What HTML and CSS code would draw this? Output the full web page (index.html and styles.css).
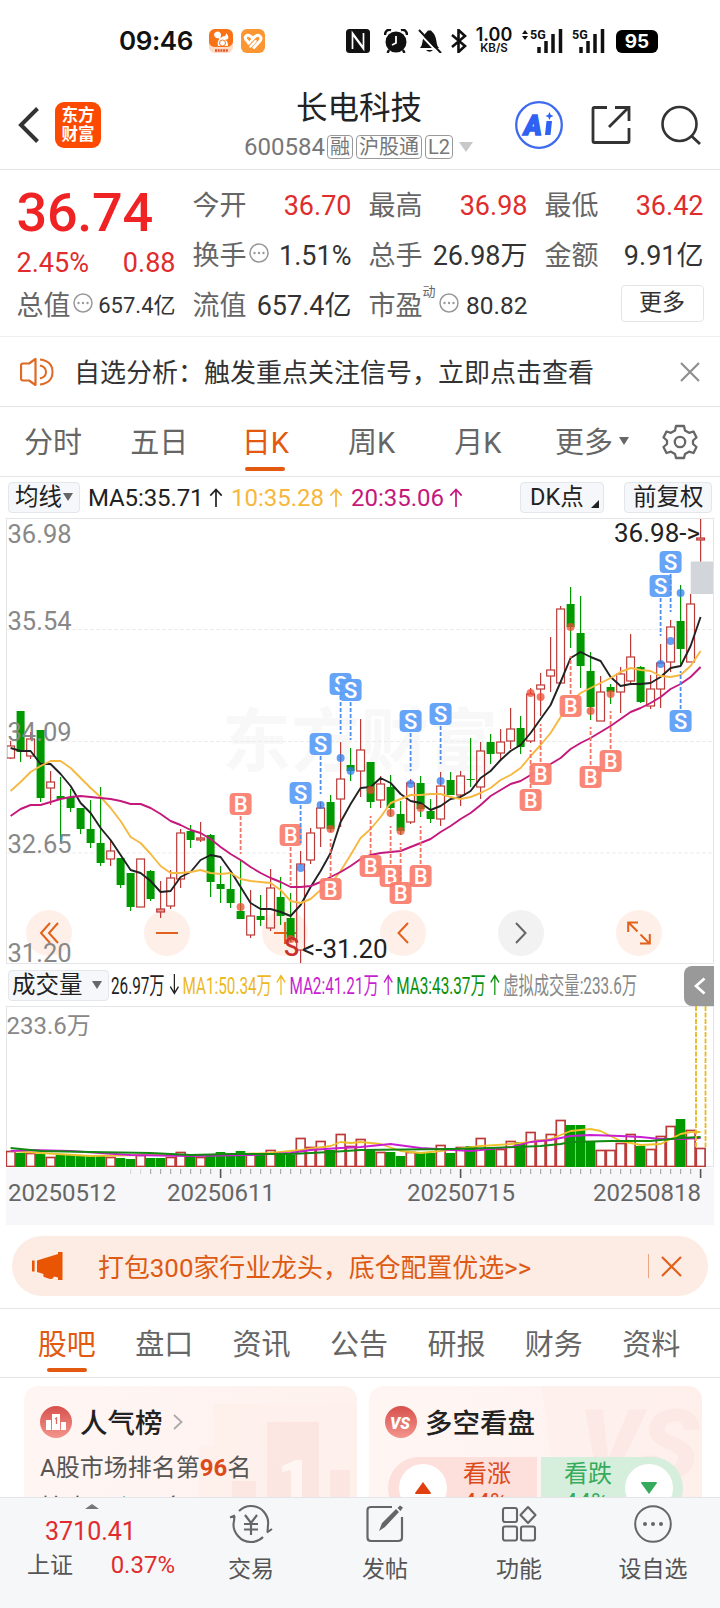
FILE: index.html
```html
<!DOCTYPE html>
<html lang="zh-CN">
<head>
    <meta charset="UTF-8">
    <meta name="viewport" content="width=device-width, initial-scale=1.0">
    <title>长电科技 600584</title>
    <link rel="stylesheet" href="styles.css">
</head>
<body>
    <div class="status-bar">
        <span class="time">09:46</span>
        <svg class="app-icon" width="24" height="24" viewBox="0 0 24 24">
            <rect width="24" height="24" rx="6" fill="#ffd9c2"/>
            <path d="M0 6a6 6 0 0 1 6-6h12a6 6 0 0 1 6 6v7c-1 4-4 5-7 5H7c-4 0-7-2-7-5z" fill="#f97316"/>
            <path d="M5 5c2-4 7-3 7 1 0 2-1 3-2 4 1-1 4-3 6-3 1-1 1-2 1-3 2 2 3 4 2 6l-3 1c3 1 3 4 3 6H9c-1-3 0-6 2-8-4 1-6-1-6-4z" fill="#fff"/>
            <circle cx="13.500" cy="14" r="3" fill="none" stroke="#f97316" stroke-width="1"/>
            <path d="M6 21.500h13" stroke="#e2562a" stroke-width="2.500" stroke-dasharray="2 .7"/>
        </svg>
        <svg class="app-icon second" width="24" height="24" viewBox="0 0 24 24">
            <rect width="24" height="24" rx="6" fill="#fb9633"/>
            <path d="M8 14L4.800 10.500Q3.500 7.500 6 6.500q2.500-1 6 3 3.500-4 6-3 3.500 2 1 5.500L13 18.500" fill="none" stroke="#fff" stroke-width="3" stroke-linejoin="round" stroke-linecap="round"/>
            <path d="M7.500 14.500l4-4M9.500 17.500l5-5.500" stroke="#fff" stroke-width="2.400" stroke-linecap="round"/>
        </svg>
        <svg class="nfc" width="24" height="24" viewBox="0 0 24 24">
            <rect width="24" height="24" rx="3.500" fill="#111"/>
            <path d="M6.500 20V4l10 13.500M17.500 4v16L7.500 6.500" fill="none" stroke="#fff" stroke-width="1.700"/>
        </svg>
        <svg class="alarm" width="24" height="24" viewBox="0 0 24 24">
            <circle cx="12" cy="13" r="10.500" fill="#111"/>
            <path d="M1 6c0-4 3-6 6-5M23 6c0-4-3-6-6-5M5 21l-1.500 3M19 21l1.500 3" stroke="#111" stroke-width="2.400" fill="none"/>
            <path d="M12 7v7l-4 2" stroke="#fff" stroke-width="1.800" fill="none"/>
        </svg>
        <svg class="bell" width="24" height="24" viewBox="0 0 24 24">
            <path d="M2 19c3-3 2-8 4-12 1-3 3-4 4-5.500h3c1 1.500 3 2.500 4 5.500 2 4 1 9 4 12zM8 21h7q-3.500 3.500-7 0z" fill="#111"/>
            <path d="M0 3l21 22" stroke="#fff" stroke-width="2"/>
            <path d="M1 1l22 23" stroke="#111" stroke-width="2"/>
        </svg>
        <svg class="bt" width="16" height="24" viewBox="0 0 16 24">
            <path d="M1 6l13 11-6.500 6V1L14 7 1 18" fill="none" stroke="#111" stroke-width="2.600"/>
        </svg>
        <div class="speed"><b>1.00</b><span>KB/S</span></div>
        <svg class="sig1" width="42" height="26" viewBox="0 0 42 26">
            <path d="M1 6l3-4 3 4zM1 8l3 4 3-4z" fill="#111"/>
            <path d="M18 25v-6M25 25V13M32 25V6M39.500 25V1" stroke="#111" stroke-width="3.500"/>
            <text x="9" y="11" class="g5">5G</text>
        </svg>
        <svg class="sig2" width="33" height="26" viewBox="0 0 33 26">
            <path d="M9 25v-6M16 25V13M23 25V6M30.500 25V1" stroke="#111" stroke-width="3.500"/>
            <text x="0" y="11" class="g5">5G</text>
        </svg>
        <div class="battery">95</div>
    </div>

    <div class="header">
        <svg class="back" width="22" height="38" viewBox="0 0 22 38"><path d="M19.500 2.500L3 19l16.500 16.500" fill="none" stroke="#333" stroke-width="4"/></svg>
        <div class="logo"><span>东方</span><span>财富</span></div>
        <div class="stock">
            <div class="stock-name">长电科技</div>
            <div class="stock-code">
                <span class="code">600584</span>
                <span class="tag">融</span>
                <span class="tag">沪股通</span>
                <span class="tag">L2</span>
                <svg width="14" height="10" viewBox="0 0 14 10"><path d="M0 0h14L7 10z" fill="#c8c8c8"/></svg>
            </div>
        </div>
        <svg class="ai" width="48" height="48" viewBox="0 0 48 48">
            <circle cx="24" cy="24" r="22.800" fill="none" stroke="#3d6af0" stroke-width="2.300"/>
            <text x="9" y="33.500" class="ai-text">A</text>
            <path d="M31.500 20h5.500l-1.500 14h-5.500z" fill="#2f62f2"/>
            <path d="M34.500 11l1.200 2.800 2.800 1.200-2.800 1.200-1.200 2.800-1.200-2.800-2.800-1.200 2.800-1.200z" fill="#2f62f2"/>
        </svg>
        <svg class="share" width="40" height="40" viewBox="0 0 40 40">
            <path d="M16 2.500H3.500q-1.500 0-1.500 1.500v32q0 1.500 1.500 1.500h33q1.500 0 1.500-1.500V23M18 22L37.500 2.500M24 2.500h14V16" fill="none" stroke="#333" stroke-width="2.800"/>
        </svg>
        <svg class="search" width="40" height="40" viewBox="0 0 40 40">
            <circle cx="18.500" cy="19" r="17" fill="none" stroke="#333" stroke-width="2.600"/>
            <path d="M30.500 31l8.500 8" stroke="#333" stroke-width="2.800"/>
        </svg>
    </div>

    <div class="quote">
        <div class="quote-main">
            <div class="price">36.74</div>
            <div class="change"><span>2.45%</span><span>0.88</span></div>
            <div class="cell"><label>总值</label><svg class="dots"><use href="#i-dots"/></svg><span class="val small">657.4亿</span></div>
        </div>
        <div class="quote-col">
            <div class="cell"><label>今开</label><span class="val up">36.70</span></div>
            <div class="cell"><label>换手</label><svg class="dots"><use href="#i-dots"/></svg><span class="val">1.51%</span></div>
            <div class="cell"><label>流值</label><span class="val">657.4亿</span></div>
        </div>
        <div class="quote-col">
            <div class="cell"><label>最高</label><span class="val up">36.98</span></div>
            <div class="cell"><label>总手</label><span class="val">26.98万</span></div>
            <div class="cell"><label>市盈</label><sup>动</sup><svg class="dots"><use href="#i-dots"/></svg><span class="val mid">80.82</span></div>
        </div>
        <div class="quote-col">
            <div class="cell"><label>最低</label><span class="val up">36.42</span></div>
            <div class="cell"><label>金额</label><span class="val">9.91亿</span></div>
            <div class="cell"><span class="more-btn">更多</span></div>
        </div>
    </div>

    <div class="notice">
        <svg width="34" height="30" viewBox="0 0 34 30">
            <path d="M15.500 2v26L9 23.500H3Q1 23.500 1 21.500v-13Q1 6.500 3 6.500h6z" fill="none" stroke="#dd6a26" stroke-width="2.200" stroke-linejoin="round"/>
            <path d="M20 8.500q6 1.500 6 6.500t-6 6.500M20 2.500q12.500 1.500 12.500 12.500T20 27.500" fill="none" stroke="#dd6a26" stroke-width="2"/>
        </svg>
        <span class="notice-text">自选分析：触发重点关注信号，立即点击查看</span>
        <svg width="20" height="20" viewBox="0 0 20 20"><path d="M1 1l18 18M19 1L1 19" stroke="#8f8f8f" stroke-width="2.200"/></svg>
    </div>

    <div class="period-tabs">
        <span>分时</span>
        <span>五日</span>
        <span class="active">日K</span>
        <span>周K</span>
        <span>月K</span>
        <span class="more">更多<i class="caret"></i></span>
        <svg width="36" height="36" viewBox="0 0 36 36">
            <path d="M14 2h8l1 4.500 4 2.300 4.500-1.300 3 6-3.500 3v3.500l3.500 3-3 6-4.500-1.300-4 2.300-1 4h-8l-1-4-4-2.300L4.500 29l-3-6L5 20v-3.500l-3.500-3 3-6L9 8.800l4-2.300z" fill="none" stroke="#666" stroke-width="2.300" stroke-linejoin="round"/>
            <circle cx="18" cy="18" r="5.200" fill="none" stroke="#666" stroke-width="2.300"/>
        </svg>
    </div>

    <div class="ma-row">
        <span class="chip">均线<i class="caret"></i></span>
        <span class="ma5">MA5:35.71<svg class="arrow"><use href="#i-up"/></svg></span>
        <span class="ma10">10:35.28<svg class="arrow"><use href="#i-up"/></svg></span>
        <span class="ma20">20:35.06<svg class="arrow"><use href="#i-up"/></svg></span>
        <span class="chip dk">DK点<i class="corner"></i></span>
        <span class="chip fq">前复权</span>
    </div>

    <div class="k-chart">
        <svg id="k-svg" width="708" height="446" viewBox="6 518 708 446"></svg>
        <div class="tools">
            <span class="tool"><svg width="20" height="22" viewBox="0 0 20 22"><path d="M11 1L2 11l9 10M19 1l-9 10 9 10"/></svg></span>
            <span class="tool"><svg width="24" height="22" viewBox="0 0 24 22"><path d="M1 11h22"/></svg></span>
            <span class="tool"><svg width="24" height="22" viewBox="0 0 24 22"><path d="M1 11h22M12 0v22"/></svg></span>
            <span class="tool"><svg width="12" height="22" viewBox="0 0 12 22"><path d="M11 1L1.500 11l9.500 10"/></svg></span>
            <span class="tool gray"><svg width="12" height="22" viewBox="0 0 12 22"><path d="M1 1l9.500 10L1 21"/></svg></span>
            <span class="tool"><svg width="24" height="24" viewBox="0 0 24 24"><path d="M1.200 11V1.500H11M1.500 1.500l9 9M22.800 13v9.500H13M22.500 22.500l-9-9"/></svg></span>
        </div>
    </div>

    <div class="vol-row">
        <span class="chip">成交量<i class="caret"></i></span>
        <div class="vol-text">
            <span class="now">26.97万<svg class="arrow"><use href="#i-down"/></svg></span>
            <span class="v1">MA1:50.34万<svg class="arrow"><use href="#i-up"/></svg></span>
            <span class="v2">MA2:41.21万<svg class="arrow"><use href="#i-up"/></svg></span>
            <span class="v3">MA3:43.37万<svg class="arrow"><use href="#i-up"/></svg></span>
            <span class="v4">虚拟成交量:233.6万</span>
        </div>
        <span class="fold"><svg width="12" height="18" viewBox="0 0 12 18"><path d="M10.500 1.500L2 9l8.500 7.500" fill="none" stroke="#fff" stroke-width="2.800"/></svg></span>
    </div>
    <div class="vol-chart">
        <svg id="v-svg" width="708" height="161" viewBox="6 1007 708 161"></svg>
    </div>
    <div class="axis">
        <svg id="axis-svg" width="708" height="12" viewBox="6 1168 708 12"></svg>
        <div class="dates">
            <span>20250512</span>
            <span>20250611</span>
            <span>20250715</span>
            <span>20250818</span>
        </div>
    </div>

    <div class="banner">
        <svg width="31" height="28" viewBox="0 0 31 28">
            <path d="M0 8.500h2.600v11H0zM5 8.500L26 2V0h4.500v28H26v-2.500l-4-1q-1 3-4 2.500l-6-2q-1-.500-.5-3L5 20z" fill="#ea5504"/>
        </svg>
        <span class="banner-text">打包300家行业龙头，底仓配置优选&gt;&gt;</span>
        <i class="divider"></i>
        <svg width="21" height="21" viewBox="0 0 21 21"><path d="M1 1l19 19M20 1L1 20" stroke="#e2611c" stroke-width="2.200"/></svg>
    </div>

    <div class="section-tabs">
        <span class="active">股吧</span>
        <span>盘口</span>
        <span>资讯</span>
        <span>公告</span>
        <span>研报</span>
        <span>财务</span>
        <span>资料</span>
    </div>

    <div class="cards">
        <div class="card">
            <svg class="card-bg" width="333" height="120" viewBox="0 0 333 120">
                <path d="M190 18h143v102H175V60h15z" fill="#fdeeea" opacity=".55"/>
                <path d="M243 36h52v84h-52zM208 95h24v25h-24zM306 84h20v36h-20z" fill="#fbe3df" opacity=".75"/>
                <path d="M258 80l14-6h6v46h-11V84l-9 2z" fill="#fff5f2"/>
            </svg>
            <div class="card-title">
                <svg width="32" height="32" viewBox="0 0 32 32">
                    <circle cx="16" cy="16" r="16" fill="url(#badge)"/>
                    <path d="M6 14h5v10H6zM12 8h8v16h-8zM21 16h5v8h-5z" fill="#fff"/>
                    <path d="M15 13l1.500-1v6" stroke="#dd6660" stroke-width="1.300" fill="none"/>
                </svg>
                <span>人气榜</span>
                <svg class="chev" width="10" height="16" viewBox="0 0 10 16"><path d="M1 1l7.500 7L1 15" fill="none" stroke="#aaa" stroke-width="1.800"/></svg>
            </div>
            <p>A股市场排名第<b>96</b>名</p>
            <p class="second">较昨日<em>↑10</em>名</p>
        </div>
        <div class="card">
            <svg class="card-bg" width="333" height="120" viewBox="0 0 333 120">
                <path d="M172 0h161v120H190z" fill="#fdeeea" opacity=".6"/>
                <text x="210" y="92" class="vs-bg">VS</text>
            </svg>
            <div class="card-title">
                <svg width="32" height="32" viewBox="0 0 32 32">
                    <circle cx="16" cy="16" r="16" fill="url(#badge)"/>
                    <text x="5" y="22.500" class="vs">VS</text>
                </svg>
                <span>多空看盘</span>
            </div>
            <div class="vote">
                <div class="bull"><i><svg width="16" height="12" viewBox="0 0 16 12"><path d="M8 0l8 11q0 1-1 1H1q-1 0-1-1z" fill="#e0400f"/></svg></i><span>看涨<br>44%</span></div>
                <div class="bear"><span>看跌<br>44%</span><i><svg width="16" height="12" viewBox="0 0 16 12"><path d="M8 12l8-11q0-1-1-1H1Q0 0 0 1z" fill="#36ab5c"/></svg></i></div>
            </div>
        </div>
    </div>

    <div class="bottom-bar">
        <div class="index">
            <i class="tri-up"></i>
            <div class="point">3710.41</div>
            <div class="index-row"><label>上证</label><span>0.37%</span></div>
        </div>
        <div class="nav">
            <svg width="44" height="40" viewBox="0 0 44 40">
                <path d="M10 7q5-5 12-5 8 0 13 6 5 6 4 13l-.500 7.500M34 33q-5 5-12 5-8 0-13-6-6-7-4-15l.500-5M1 13.500l5-2M43 25l-5 3.500" fill="none" stroke="#666" stroke-width="2.100"/>
                <path d="M16 11l6 8 6-8M15 20h14M15 25.500h14M22 19v12" fill="none" stroke="#666" stroke-width="2.200"/>
            </svg>
            <span>交易</span>
        </div>
        <div class="nav">
            <svg width="38" height="40" viewBox="0 0 38 40">
                <path d="M26 3H5Q1.500 3 1.500 6v27.500q0 3.500 3.500 3.500h27q4 0 4-3.500V13" fill="none" stroke="#666" stroke-width="2.200"/>
                <path d="M13 27l3-8L30 5l3 3-14 15zM31.500 4l2.500-2.500 3 2L34.500 7z" fill="#666"/>
            </svg>
            <span>发帖</span>
        </div>
        <div class="nav">
            <svg width="36" height="40" viewBox="0 0 36 40">
                <g fill="none" stroke="#666" stroke-width="2.100"><rect x="2" y="4" width="14" height="14" rx="2"/><rect x="2" y="22.500" width="14" height="14" rx="2"/><rect x="20" y="22.500" width="14" height="14" rx="2"/><path d="M27 3l7.500 8-7.500 8-7.500-8z" stroke-linejoin="round"/></g>
            </svg>
            <span>功能</span>
        </div>
        <div class="nav">
            <svg width="40" height="40" viewBox="0 0 40 40">
                <circle cx="20" cy="20" r="17.800" fill="none" stroke="#666" stroke-width="2"/>
                <g fill="#666"><circle cx="12" cy="20" r="2"/><circle cx="20" cy="20" r="2"/><circle cx="28" cy="20" r="2"/></g>
            </svg>
            <span>设自选</span>
        </div>
    </div>

    <svg class="defs" width="0" height="0">
        <defs>
            <linearGradient id="badge" x1="0" y1="0" x2="0" y2="1"><stop offset="0" stop-color="#d8504c"/><stop offset="1" stop-color="#f2958c"/></linearGradient>
        </defs>
        <symbol id="i-dots" viewBox="0 0 20 20">
            <circle cx="10" cy="10" r="9" fill="none" stroke="#999" stroke-width="1.500"/>
            <circle cx="5.500" cy="10" r="1.200" fill="#999"/><circle cx="10" cy="10" r="1.200" fill="#999"/><circle cx="14.500" cy="10" r="1.200" fill="#999"/>
        </symbol>
        <symbol id="i-up" viewBox="0 0 14 20"><path d="M7 20V2M1 8l6-6.500L13 8" fill="none" stroke="currentColor" stroke-width="1.800"/></symbol>
        <symbol id="i-down" viewBox="0 0 14 20"><path d="M7 0v18M1 12l6 6.500 6-6.500" fill="none" stroke="currentColor" stroke-width="1.800"/></symbol>
    </svg>
    <script src="chart.js"></script>
</body>
</html>
```
FILE: styles.css
```css
* {
    box-sizing: border-box;
}
body {
    margin: 0;
    width: 720px;
    height: 1608px;
    overflow: hidden;
    background: #fff;
    color: #333;
    font-family: Roboto, "Noto Sans CJK SC", sans-serif;
    font-weight: 400;
    display: flex;
    flex-direction: column;
}
svg {
    flex: none;
    display: block;
}
i, em {
    font-style: normal;
}
.up {
    color: #e02c2c;
}
.defs {
    position: absolute;
}

/* Status bar */
.status-bar {
    height: 80px;
    flex: none;
    display: flex;
    align-items: center;
    padding: 2px 0 0 119px;
}
.time {
    width: 90px;
    font: 600 26px/30px Inter, sans-serif;
    letter-spacing: -0.4px;
    color: #111;
}
.second {
    margin-left: 8px;
}
.nfc {
    margin-left: 81px;
}
.alarm {
    margin-left: 14px;
}
.bell {
    margin-left: 10px;
}
.bt {
    margin-left: 9px;
}
.speed {
    width: 38px;
    margin-left: 8px;
    color: #111;
    text-align: center;
    font-family: Inter, sans-serif;
    font-weight: 600;
}
.speed b {
    display: block;
    font-size: 18px;
    line-height: 14px;
    font-weight: 600;
}
.speed span {
    display: block;
    font-size: 11.500px;
    line-height: 12px;
}
.g5 {
    font: 700 12.500px Roboto, sans-serif;
    fill: #111;
}
.sig1 {
    margin-left: 8px;
}
.sig2 {
    margin-left: 9px;
}
.battery {
    width: 42px;
    height: 23px;
    margin-left: 11px;
    border-radius: 6px;
    background: #000;
    color: #fff;
    text-align: center;
    font: 700 19px/23px Inter, sans-serif;
}

/* Header */
.header {
    height: 90px;
    flex: none;
    display: flex;
    align-items: center;
    padding-left: 18px;
    border-bottom: 1px solid #e5e5e5;
}
.logo {
    width: 46px;
    height: 46px;
    margin-left: 15px;
    border-radius: 9px;
    background: #fd4a03;
    color: #fff;
    font-size: 16.500px;
    font-weight: 700;
    line-height: 19px;
    text-align: center;
    padding-top: 4px;
}
.logo span {
    display: block;
}
.stock {
    width: 230px;
    margin-left: 143px;
}
.stock-name {
    margin-top: 5px;
    font-size: 31.500px;
    line-height: 40px;
    text-align: center;
    color: #222;
}
.stock-code {
    display: flex;
    align-items: center;
    height: 26px;
    margin: 5px 0 5px;
    color: #777;
}
.code {
    width: 83px;
    flex: none;
    font-size: 24px;
    line-height: 26px;
}
.tag {
    height: 24px;
    flex: none;
    padding: 0 2px;
    margin-right: 3px;
    border: 1px solid #999;
    border-radius: 4px;
    font-size: 20px;
    line-height: 22px;
    white-space: nowrap;
}
.stock-code svg {
    margin-left: 3px;
}
.ai {
    margin-left: 41px;
}
.ai-text {
    font: italic 900 27px Roboto, sans-serif;
    fill: #2f62f2;
    stroke: #2f62f2;
    stroke-width: 1.500px;
}
.share {
    margin-left: 28px;
}
.search {
    margin-left: 30px;
}

/* Quote */
.quote {
    height: 167px;
    flex: none;
    display: grid;
    grid-template-columns: repeat(4, 159px);
    column-gap: 17px;
    padding: 10px 0 0 16.500px;
    border-bottom: 1px solid #eee;
}
.price {
    height: 64px;
    font-size: 54px;
    font-weight: 500;
    line-height: 65px;
    letter-spacing: -0.3px;
    color: #ef2323;
}
.change {
    height: 36px;
    display: flex;
    justify-content: space-between;
    font-size: 27px;
    line-height: 39px;
    color: #e02c2c;
}
.cell {
    height: 50px;
    display: flex;
    align-items: center;
    font-size: 27px;
    line-height: 50px;
    white-space: nowrap;
}
.cell label {
    color: #666;
    padding-top: 2px;
}
.val {
    margin-left: auto;
    padding-top: 1px;
}
.val.small {
    font-size: 22px;
}
.val.mid {
    font-size: 24.500px;
}
.dots {
    width: 20px;
    height: 20px;
    margin-left: 2px;
    margin-bottom: 4px;
}
.cell sup {
    font-size: 13px;
    line-height: 14px;
    align-self: flex-start;
    color: #666;
    margin-top: 5px;
    width: 14px;
}
.more-btn {
    width: 83px;
    height: 37px;
    margin-left: auto;
    margin-bottom: 3px;
    border: 1px solid #e4e4e4;
    border-radius: 4px;
    text-align: center;
    font-size: 23px;
    line-height: 34px;
}

/* Notice */
.notice {
    height: 70px;
    flex: none;
    display: flex;
    align-items: center;
    padding: 0 20px 0 20px;
    border-bottom: 1px solid #e5e5e5;
}
.notice-text {
    flex: 1;
    margin-left: 20px;
    margin-bottom: 3px;
    font-size: 26px;
    white-space: nowrap;
}

/* K line tabs */
.period-tabs {
    height: 70px;
    flex: none;
    display: flex;
    align-items: center;
    border-bottom: 1px solid #e5e5e5;
    font-size: 29px;
    color: #666;
}
.period-tabs span {
    width: 106.200px;
    height: 69px;
    line-height: 73px;
    text-align: center;
    position: relative;
}
.period-tabs .more {
    width: 131px;
    padding-right: 9px;
}
.period-tabs .active, .section-tabs .active {
    color: #e2590f;
}
.period-tabs .active::after, .section-tabs .active::after {
    content: "";
    position: absolute;
    left: 50%;
    bottom: 5px;
    width: 40px;
    height: 4px;
    margin-left: -20px;
    border-radius: 2px;
    background: #e2590f;
}
.caret {
    display: inline-block;
    border: 5px solid transparent;
    border-top: 8px solid #666;
    border-bottom: 0;
    margin-left: 6px;
    vertical-align: 8px;
}

/* MA row */
.ma-row {
    height: 41px;
    flex: none;
    display: flex;
    align-items: center;
    padding-left: 8px;
    font-size: 24px;
    line-height: 30px;
    white-space: nowrap;
}
.chip {
    height: 31px;
    border: 1px solid #e3e6ea;
    border-radius: 4px;
    background: #f6f7fa;
    font-size: 23.500px;
    line-height: 29px;
    color: #222;
    padding-left: 6px;
    white-space: nowrap;
}
.ma-row .chip:first-child {
    width: 72px;
}
.ma-row .caret {
    margin-left: 1px;
    vertical-align: 4px;
}
.arrow {
    display: inline-block;
    width: 14px;
    height: 19px;
    margin-left: 5px;
    vertical-align: -1px;
}
.ma5 {
    width: 143px;
    margin-left: 8px;
    color: #222;
    letter-spacing: -0.1px;
}
.ma10 {
    width: 120px;
    color: #f6b73c;
}
.ma20 {
    width: 169px;
    color: #c4187c;
}
.chip.dk {
    width: 84px;
    padding-left: 9px;
}
.corner {
    display: inline-block;
    border-left: 8px solid transparent;
    border-bottom: 8px solid #222;
    margin-left: 7px;
    vertical-align: -3px;
}
.chip.fq {
    width: 88px;
    margin-left: 20px;
    padding-left: 8px;
}

/* Charts */
.k-chart {
    position: relative;
    height: 447px;
    flex: none;
    padding: 0 6px;
}
#k-svg {
    position: relative;
    z-index: 1;
}
.axis-label {
    font-size: 25.500px;
    fill: #888;
}
.price-tip {
    font-size: 26px;
    fill: #222;
}
.mark {
    font-size: 22px;
    font-weight: 500;
    fill: #fff;
    text-anchor: middle;
}
.low-mark {
    font-size: 25px;
    font-weight: 500;
    fill: #c9302c;
    text-anchor: middle;
}
.watermark {
    font-size: 69px;
    font-weight: 700;
    fill: #f8f8f9;
}
.tools {
    position: absolute;
    left: 26px;
    bottom: 9px;
    display: flex;
    gap: 72px;
}
.tool {
    width: 46px;
    height: 46px;
    border-radius: 50%;
    background: #fef0e8;
    display: flex;
    align-items: center;
    justify-content: center;
}
.tool path {
    fill: none;
    stroke: #e2611c;
    stroke-width: 2px;
}
.tool.gray {
    background: #f2f2f2;
}
.tool.gray path {
    stroke: #666;
}
.vol-row {
    height: 41px;
    flex: none;
    display: flex;
    align-items: center;
    padding: 0 6px 0 8px;
}
.vol-row .chip {
    width: 101px;
    padding-left: 3px;
    flex: none;
}
.vol-row .caret {
    margin-left: 9px;
    vertical-align: 4px;
}
.vol-text {
    display: flex;
    flex: none;
    width: 560px;
    margin-left: 2px;
    font-size: 23.500px;
    line-height: 30px;
    white-space: nowrap;
    transform: scaleX(0.65);
    transform-origin: left;
}
.vol-text span {
    width: 164.500px;
    flex: none;
}
.vol-text .arrow {
    width: 19px;
    height: 21px;
}
.vol-text .now {
    width: 110px;
    color: #222;
}
.vol-text .v1 {
    color: #edb91f;
}
.vol-text .v2 {
    color: #c71fd1;
}
.vol-text .v3 {
    color: #0a910a;
}
.vol-text .v4 {
    color: #888;
}
.fold {
    width: 30px;
    height: 40px;
    margin-left: auto;
    border-radius: 8px 0 0 8px;
    background: #999;
    display: flex;
    align-items: center;
    padding-left: 10px;
}
.vol-chart {
    height: 162px;
    flex: none;
    padding: 0 6px;
}
.axis {
    height: 57px;
    flex: none;
    margin: 0 6px;
    background: #f7f7fa;
}
.dates {
    display: flex;
    padding-left: 2px;
    font-size: 24px;
    line-height: 26px;
    color: #666;
}
.dates span:nth-child(1) {
    width: 159px;
}
.dates span:nth-child(2) {
    width: 240px;
}
.dates span:nth-child(3) {
    width: 186px;
}

/* Banner */
.banner {
    height: 60px;
    flex: none;
    margin: 11px 12px 12px;
    padding: 0 26px 0 20px;
    border-radius: 30px;
    background: #fdece3;
    color: #dd5a14;
    display: flex;
    align-items: center;
}
.banner-text {
    flex: 1;
    margin-left: 35px;
    margin-bottom: 2px;
    font-size: 25.900px;
    white-space: nowrap;
}
.divider {
    width: 1px;
    height: 24px;
    margin-right: 12px;
    background: #eaa583;
}

/* Section tabs */
.section-tabs {
    height: 70px;
    flex: none;
    display: flex;
    padding: 0 20px 0 18px;
    border-top: 1px solid #e5e5e5;
    border-bottom: 1px solid #e5e5e5;
    font-size: 29px;
    line-height: 73px;
    color: #666;
}
.section-tabs span {
    flex: 1;
    height: 68px;
    text-align: center;
    position: relative;
}

/* Cards */
.cards {
    height: 119px;
    flex: none;
    padding: 8px 18px 0 24px;
    display: flex;
    gap: 12px;
    overflow: hidden;
}
.card {
    position: relative;
    width: 333px;
    height: 150px;
    flex: none;
    padding: 18px 16px 0;
    border-radius: 14px;
    background: linear-gradient(100deg, #fff6f3, #fef1ee);
    overflow: hidden;
}
.card-bg {
    position: absolute;
    left: 0;
    top: 0;
}
.card-title {
    position: relative;
    display: flex;
    align-items: center;
    height: 36px;
    font-size: 27.500px;
    font-weight: 500;
    color: #222;
}
.card-title span {
    margin-left: 8px;
    margin-bottom: 2px;
}
.chev {
    margin-left: 10px;
}
.card p {
    position: relative;
    margin: 10px 0 0;
    font-size: 24px;
    line-height: 36px;
    color: #555;
}
.card p.second {
    margin: 4px 0 0;
}
.card b {
    color: #dc4a1a;
}
.card em {
    color: #36ab5c;
}
.vs {
    font: italic 900 16px Roboto, sans-serif;
    fill: #fff;
}
.vs-bg {
    font: italic 900 96px Roboto, sans-serif;
    fill: #fce8e4;
}
.vote {
    position: relative;
    display: flex;
    gap: 4px;
    width: 295px;
    height: 62px;
    margin: 17px 0 0 3px;
    font-size: 24px;
    line-height: 28px;
}
.vote > div {
    display: flex;
    align-items: center;
}
.vote i {
    width: 48px;
    height: 48px;
    flex: none;
    border-radius: 50%;
    background: #fff;
    display: flex;
    align-items: center;
    justify-content: center;
}
.vote span {
    height: 58px;
    margin-top: 2px;
}
.bull {
    width: 149px;
    padding-left: 11px;
    border-radius: 31px 0 0 31px;
    background: #fddfdb;
    color: #dc4a1a;
}
.bull span {
    margin-left: 16px;
}
.bear {
    width: 142px;
    padding: 0 10px 0 23px;
    justify-content: space-between;
    border-radius: 0 31px 31px 0;
    background: #d6efdd;
    color: #36ab5c;
}

/* Bottom bar */
.bottom-bar {
    height: 111px;
    flex: none;
    display: flex;
    border-top: 1px solid #e3e5e8;
    background: #f6f7f9;
    color: #555;
    font-size: 22.500px;
}
.index {
    width: 184px;
    color: #e02c2c;
}
.tri-up {
    display: block;
    width: 14px;
    margin: 6px 0 0 85px;
    border: 7px solid transparent;
    border-top: 0;
    border-bottom: 5px solid #777;
}
.point {
    margin: 8px 0 0 45px;
    font-size: 25px;
    line-height: 30px;
}
.index-row {
    display: flex;
    justify-content: space-between;
    padding: 3px 9px 0 27px;
    line-height: 30px;
    font-size: 24px;
}
.index-row label {
    padding-top: 1px;
    font-size: 23px;
    color: #555;
}
.nav {
    width: 134px;
    display: flex;
    flex-direction: column;
    align-items: center;
    padding-top: 6px;
}
.nav span {
    line-height: 30px;
    margin-top: 11px;
    font-size: 23px;
}
```
FILE: chart.js
```js
const GREEN = '#009a00';
const RED = '#bb3a38';
const xOf = i => 10.6 + i * 10;

// high, body top, body bottom, low, direction (1 = up, 0 = down)
const candles = [
    [741,746,758,759,1],[711,711,752,762,0],[732,739,756,759,1],[730,730,798,802,0],[771,782,788,805,1],
    [777,796,799,842,0],[789,797,808,812,0],[808,808,829,834,0],[800,829,843,848,0],[787,843,863,866,0],
    [840,851,859,866,1],[858,858,885,888,0],[873,873,907,911,0],[859,859,907,907,1],[870,871,899,901,0],
    [881,909,912,918,1],[870,878,906,909,1],[829,833,879,888,1],[825,831,840,848,0],[822,838,840,842,1],
    [834,835,882,897,0],[866,884,889,903,0],[873,889,903,908,0],[861,911,919,919,0],[890,916,935,938,1],
    [895,916,920,926,0],[869,888,928,931,1],[877,897,916,925,0],[893,918,938,942,0],[851,864,950,964,1],
    [828,833,860,864,1],[802,808,828,847,1],[795,802,829,832,0],[742,779,799,827,1],[748,765,771,781,0],
    [719,750,771,797,1],[762,762,802,808,0],[776,784,800,808,1],[775,787,808,817,0],[801,814,831,835,0],
    [779,783,822,824,1],[776,783,809,817,0],[799,811,819,823,0],[772,786,819,826,1],[772,780,795,795,0],
    [771,776,795,806,1],[738,779,780,787,0],[742,751,787,799,1],[734,742,754,764,0],[729,742,753,761,1],
    [708,729,741,749,1],[716,728,747,754,0],[688,694,741,743,1],[673,685,689,716,1],[637,670,676,692,1],
    [606,609,683,683,1],[587,604,627,648,0],[596,633,666,688,0],[652,671,707,720,0],[676,692,721,721,1],
    [684,687,692,704,0],[667,674,692,713,1],[634,657,681,685,1],[666,667,702,703,0],[675,689,706,709,1],
    [644,663,689,708,1],[620,627,662,672,1],[585,621,649,665,0],[594,604,662,662,1],[518,538,540,562,1]
];
const ma5 = [748,751,751,764,764,774,786,803,813,828,840,855,870,873,881,892,891,877,872,860,855,857,871,887,903,909,909,912,916,905,887,871,853,822,804,788,787,778,783,794,801,803,810,806,799,797,791,778,771,760,751,745,733,719,705,682,658,652,657,661,677,686,684,684,683,677,668,666,646,617];
const ma10 = [791,782,772,766,761,761,768,778,788,797,808,821,837,843,854,866,873,873,872,870,873,874,873,879,881,882,883,890,901,903,899,890,884,871,855,838,829,817,803,799,795,795,794,794,797,799,797,793,788,780,775,768,756,745,733,717,702,693,688,683,678,672,668,670,671,676,677,675,666,651];
const ma20 = [816,809,805,805,802,799,797,796,797,798,799,801,804,804,808,814,821,825,830,833,839,847,854,860,867,873,878,882,887,887,886,882,877,872,866,859,855,853,852,851,847,843,839,832,826,819,813,805,796,790,784,781,775,770,764,758,749,743,738,732,726,719,712,708,703,697,689,684,677,667];

// type, candle index, badge centre, dot
const marks = [
    ['B',23,804,907],['B',28,835,939],['S',29,793,868],['S',31,744,805],['S',33,684,758],['S',34,690,771],
    ['B',32,889,829],['B',36,866,790],['B',38,876,813],['B',39,893,831],['B',41,876,808],['S',40,721,784],
    ['S',43,714,781],['B',52,800,693],['B',53,774,697],['B',56,706,627],['B',58,777,711],['B',60,761,694],
    ['S',65,586,664],['S',66,562,641],['S',67,721,593]
];

const volTop = [1152,1154,1154,1155,1158,1156,1156,1157,1157,1157,1158,1159,1160,1156,1159,1159,1158,1153,1157,1158,1156,1153,1155,1152,1155,1156,1151,1156,1156,1139,1148,1142,1151,1135,1147,1140,1151,1153,1153,1157,1153,1154,1154,1146,1154,1148,1147,1139,1149,1150,1142,1143,1133,1141,1135,1121,1126,1126,1142,1151,1151,1144,1135,1147,1150,1137,1127,1120,1131,1149];
const volUp = [0,2,4,10,13,16,17,19,24,26,29,30,31,33,34,35,37,40,43,45,47,49,50,52,53,54,55,59,60,61,62,64,65,66,68,69];

const volLines = [
    ['#edc12c', [[0,1152],[3,1154],[8,1157],[13,1156],[20,1156],[26,1154],[29,1151],[32,1147],[33,1143],[34,1144],[35,1143],[37,1145],[39,1152],[41,1154],[43,1152],[47,1147],[50,1145],[52,1143],[54,1140],[56,1132],[58,1130],[59,1132],[61,1142],[63,1146],[65,1145],[67,1135],[68,1133],[69,1133]]],
    ['#c71fd1', [[0,1152],[2,1151],[6,1152],[12,1156],[18,1157],[24,1156],[28,1154],[30,1151],[33,1149],[35,1148],[38,1145],[41,1149],[46,1152],[50,1148],[52,1143],[54,1141],[56,1137],[58,1136],[61,1137],[63,1138],[65,1140],[67,1140],[69,1139]]],
    ['#108a10', [[0,1149],[3,1152],[8,1153],[14,1154],[18,1156],[22,1155],[28,1155],[32,1153],[35,1151],[44,1150],[48,1149],[53,1147],[55,1145],[56,1143],[60,1142],[64,1142],[67,1139],[69,1138]]]
];

function line(x1, y1, x2, y2, color, width, extra) {
    return `<line x1="${x1}" y1="${y1}" x2="${x2}" y2="${y2}" stroke="${color}" stroke-width="${width}" ${extra || ''}/>`;
}
function polyline(points, color, width) {
    return `<polyline points="${points.map(p => p.join(',')).join(' ')}" fill="none" stroke="${color}" stroke-width="${width}" stroke-linejoin="round"/>`;
}

function drawCandles() {
    let s = '<text class="watermark" x="222" y="766">东方财富</text>';
    [629.5, 741.5, 853].forEach(y => s += line(6, y, 714, y, '#ececec', 1, 'stroke-dasharray="4 2"'));
    candles.forEach(([h, t, b, l, up], i) => {
        const x = xOf(i);
        if (up) {
            if (t > h) s += line(x, h, x, t, RED, 1.2);
            if (l > b) s += line(x, b, x, l, RED, 1.2);
            s += `<rect x="${x - 3.9}" y="${t}" width="7.800" height="${b - t}" fill="${b - t < 4 ? '#ec9c98' : 'none'}" stroke="${RED}" stroke-width="1.200"/>`;
        } else {
            s += line(x, h, x, l, GREEN, 1.2);
            s += `<rect x="${x - 4}" y="${t}" width="8" height="${b - t}" fill="${GREEN}"/>`;
        }
    });
    s += '<rect x="690.700" y="561.500" width="24" height="32.500" fill="#d2d6db"/>';
    [[ma5, '#222'], [ma10, '#f5b942'], [ma20, '#c4187c']].forEach(([data, color]) => {
        s += polyline(data.map((y, i) => [xOf(i), y]), color, 1.9);
    });
    [['36.98', 543], ['35.54', 630], ['34.09', 741], ['32.65', 853], ['31.20', 962]].forEach(([t, y]) => {
        s += `<text class="axis-label" x="7.500" y="${y}">${t}</text>`;
    });
    marks.forEach(([type, i, y, dot]) => {
        const x = xOf(i);
        // the connector runs from the badge towards its candle
        const dir = dot > y ? 1 : -1;
        const buy = type === 'B';
        s += line(x, y + dir * 12, x, y + dir * 50, buy ? '#f37466' : '#4f8fee', 1.8, 'stroke-dasharray="4 2"');
        s += `<circle cx="${x}" cy="${dot}" r="4" fill="${buy ? '#f04a32' : '#2f7df0'}" opacity=".75"/>`;
        s += `<rect x="${x - 11}" y="${y - 11}" width="22" height="22" rx="4" fill="${buy ? '#f9806f' : '#5e9ff8'}" opacity=".95"/>`;
        s += `<text class="mark" x="${x}" y="${y + 7.8}">${type}</text>`;
    });
    s += '<text class="low-mark" x="291.500" y="956">S</text>';
    s += '<text class="price-tip" x="302" y="958">&lt;-31.20</text>';
    s += '<text class="price-tip" x="614" y="542">36.98-&gt;</text>';
    s += '<rect x="6.500" y="518.500" width="707" height="445" fill="none" stroke="#e3e5e8"/>';
    document.getElementById('k-svg').innerHTML = s;
}

function drawVolume() {
    let s = '<rect x="6.500" y="1007.500" width="707" height="160" fill="none" stroke="#e3e5e8"/>';
    volTop.forEach((y, i) => {
        const x = xOf(i);
        if (volUp.includes(i)) {
            s += `<rect x="${x - 4.3}" y="${y + .5}" width="8.800" height="${1167 - y}" fill="#fff" stroke="${RED}" stroke-width="1.700"/>`;
        } else {
            s += `<rect x="${x - 4.9}" y="${y}" width="9.600" height="${1168 - y}" fill="${GREEN}"/>`;
        }
    });
    volLines.forEach(([color, points]) => s += polyline(points.map(([i, y]) => [xOf(i), y]), color, 1.8));
    [696, 705.5].forEach(x => s += line(x, 1007, x, 1148, '#e8b923', 1.8, 'stroke-dasharray="5 1.5"'));
    s += '<text class="axis-label" x="6.500" y="1035" style="font-size:24px">233.6万</text>';
    document.getElementById('v-svg').innerHTML = s;
}

function drawAxis() {
    let s = '';
    for (let i = 12; i < 70; i++) {
        const major = i === 21 || i === 45 || i === 69;
        s += line(xOf(i), 1169, xOf(i), major ? 1178 : 1174, major ? '#555' : '#aaa', major ? 1.6 : 1.2, i < 14 ? 'opacity=".4"' : '');
    }
    document.getElementById('axis-svg').innerHTML = s;
}

drawCandles();
drawVolume();
drawAxis();
```
